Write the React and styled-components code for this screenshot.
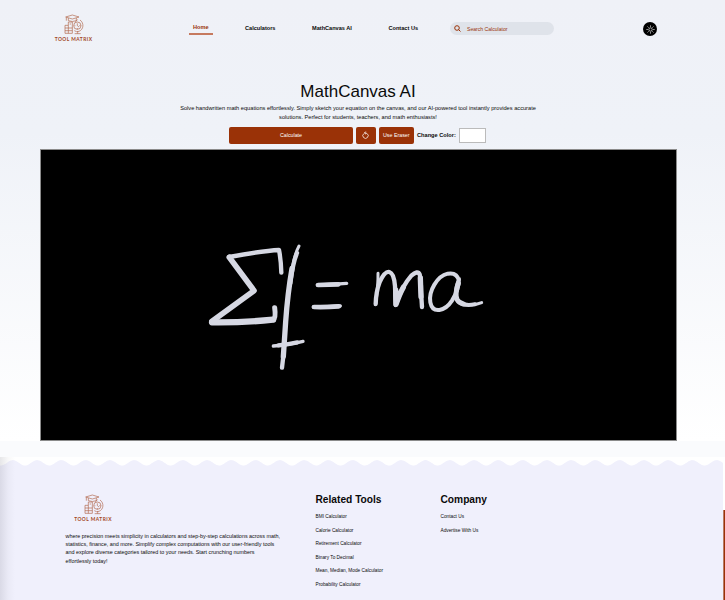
import React from "react";
import styled, { createGlobalStyle } from "styled-components";

const rust = "#9a3207";

const Global = createGlobalStyle`
  * { box-sizing: border-box; }
  html, body { margin: 0; padding: 0; }
  body {
    width: 725px;
    height: 600px;
    overflow: hidden;
    font-family: "Liberation Sans", Arial, sans-serif;
    color: #0a0a0a;
    background: #fff;
  }
  h1, h2, p, ul { margin: 0; padding: 0; }
`;

const Page = styled.div`
  width: 725px;
  height: 600px;
  overflow: hidden;
  display: flex;
  flex-direction: column;
`;

const Upper = styled.div`
  height: 441px;
  flex: none;
  display: flex;
  flex-direction: column;
  background: linear-gradient(180deg, #eff1f7 0%, #eff2f8 30%, #ffffff 100%);
`;

const Header = styled.header`
  height: 57px;
  display: flex;
  align-items: flex-start;
  padding: 14px 68px 0 55px;
`;

const Brand = styled.div`
  display: flex;
  flex-direction: column;
  align-items: center;
  width: 37px;
  height: 28px;
  color: ${rust};
  svg { display: block; flex: none; }
`;

const BrandName = styled.span`
  margin-top: 1px;
  font: 700 4.9px/6px "Lato", "Liberation Sans", sans-serif;
  letter-spacing: 0.45px;
  white-space: nowrap;
  opacity: 0.9;
`;

const Nav = styled.nav`
  display: flex;
  margin: 8px 0 0 96.5px;
  width: 261.5px;
  height: 14px;
`;

const NavItem = styled.a`
  flex: none;
  width: ${(p) => p.$width}px;
  font-size: 5.6px;
  font-weight: 700;
  line-height: 12px;
  white-space: nowrap;
`;

const ActiveItem = styled(NavItem)`
  height: 13px;
  margin-right: 32px;
  line-height: 10px;
  text-align: center;
  color: ${rust};
  border-bottom: 2px solid #c67a5f;
`;

const Search = styled.div`
  display: flex;
  align-items: center;
  gap: 6px;
  width: 104px;
  height: 13px;
  margin-top: 8.3px;
  padding-left: 4px;
  border-radius: 7px;
  background: #dfe3ea;
  color: ${rust};
  font-size: 5.1px;
  white-space: nowrap;
`;

const ThemeToggle = styled.button`
  display: grid;
  place-items: center;
  width: 14px;
  height: 14px;
  margin: 8px 0 0 auto;
  padding: 0;
  border: 0;
  border-radius: 50%;
  background: #000;
  color: #ddd;
`;

const Title = styled.h1`
  margin-top: 24px;
  height: 21px;
  font-size: 17px;
  font-weight: 400;
  line-height: 21px;
  text-align: center;
  padding-right: 9px;
`;

const Lead = styled.p`
  margin-top: 2px;
  padding-right: 9px;
  font-size: 5.66px;
  line-height: 8.7px;
  text-align: center;
  white-space: nowrap;
`;

const Toolbar = styled.div`
  display: flex;
  align-items: center;
  height: 17px;
  margin: 5.4px 0 5.2px 229px;
`;

const ToolButton = styled.button`
  display: grid;
  place-items: center;
  width: ${(p) => p.$width}px;
  height: 17px;
  margin-right: 3px;
  padding: 0;
  border: 0;
  border-radius: 2px;
  background: ${rust};
  color: #fff;
  font: 5.3px "Liberation Sans", Arial, sans-serif;
  white-space: nowrap;
`;

const ColorLabel = styled.span`
  width: 42px;
  font-size: 5.65px;
  font-weight: 700;
  white-space: nowrap;
`;

const Swatch = styled.span`
  width: 27px;
  height: 15px;
  border: 1px solid #bbb;
  background: #fff;
`;

const Canvas = styled.div`
  flex: none;
  width: 637px;
  height: 292px;
  margin-left: 40px;
  border: 1px solid #8b8b8b;
  background: #000;
  svg { display: block; }
`;

const Strip = styled.div`
  flex: none;
  height: 15.5px;
  background: #fafbfd;
`;

const FooterWrap = styled.footer`
  position: relative;
  flex: 1;
  display: flex;
  flex-direction: column;
  width: 723px;
  background: #f0f0fc;
  > svg { display: block; flex: none; }
`;

const EdgeShade = styled.div`
  position: absolute;
  inset: 0 auto 0 0;
  width: 15px;
  background: linear-gradient(90deg, rgba(90, 90, 105, 0.15), rgba(90, 90, 105, 0.04) 55%, transparent);
`;

const ScrollMark = styled.div`
  position: absolute;
  top: 53.5px;
  right: -2px;
  bottom: 0;
  width: 2px;
  background: ${rust};
  border-left: 1px solid #b77a65;
`;

const Columns = styled.div`
  display: grid;
  grid-template-columns: 250px 125px 1fr;
  padding: 26px 0 0 65.5px;
`;

const About = styled.div`
  > div { margin: 1.5px 0 0 9px; }
  p {
    margin-top: 10px;
    font-size: 5.42px;
    line-height: 8.2px;
    white-space: nowrap;
  }
`;

const Heading = styled.h2`
  font-size: 10.2px;
  line-height: 13px;
  white-space: nowrap;
`;

const Links = styled.ul`
  margin-top: 4.5px;
  list-style: none;
  font-size: 4.77px;
  line-height: 13.6px;
  white-space: nowrap;
`;

function Logo() {
  return (
    <Brand>
      <svg width="21" height="21" viewBox="0 0 63 63" fill="none" stroke="currentColor" strokeWidth="2" opacity="0.72">
        <path d="M8 9 28 3l20 6-20 6zM16 12v8q12 5 24 0v-8M10 10v10" />
        <path d="M6 58V34h10V24h12v34zM6 42h22M6 50h22M16 34v24M20 30h4" />
        <path d="M44 17q-5 2-7 8" />
        <circle cx="43" cy="35" r="11" />
        <path d="M43 28v7l5 4M34 35h3M49 35h4M43 42v4M51 18c13 9 11 29-3 34q-8 3-14-2M44 52v7M35 59h18" />
      </svg>
      <BrandName>TOOL MATRIX</BrandName>
    </Brand>
  );
}

function Wave() {
  const period = 24.27;
  const points = [];
  for (let x = 723; x >= 0; x -= 1) {
    const y = 5.8 - 2.7 * Math.cos(((x - 12.9) / period) * Math.PI * 2);
    points.push(`L${x} ${y.toFixed(2)}`);
  }
  return (
    <svg width="723" height="10" viewBox="0 0 723 10">
      <path d={`M0 0H723${points.join("")}Z`} fill="#fff" />
    </svg>
  );
}

function Equation() {
  return (
    <svg width="635" height="290" viewBox="41 150 635 290" fill="none" stroke="#d6d8e3" strokeLinecap="round" strokeLinejoin="round">
      <g transform="translate(200 235) scale(.33333)">
        <path strokeWidth="13" d="M244 113Q243 75 237 45 190 47 87 66" />
        <path strokeWidth="17" d="M88 67 162 167 36 259" />
        <path strokeWidth="19" d="M36 262Q130 263 219 254" />
        <path strokeWidth="15" d="M220 254Q228 248 224 218" />
        <path strokeWidth="9" d="M297 33Q285 55 279 90" />
        <path strokeWidth="13" d="M291 54Q278 85 271 145" />
        <path strokeWidth="16" d="M276 100Q263 175 257 260L250 365" />
        <path strokeWidth="13" d="M251 355 246 398" />
        <path strokeWidth="10" d="M220 333Q270 329 309 319" />
        <path strokeWidth="13" d="M235 331Q266 328 292 322" />
        <path strokeWidth="10" d="M352 150Q395 149 440 145M340 216Q382 216 421 213" />
        <path strokeWidth="14" d="M354 150Q390 149 415 148M342 216Q380 217 416 214" />
      </g>
      <g transform="translate(340 250) scale(.33333)">
        <path strokeWidth="9" d="M114 70Q115 100 107 163" />
        <path strokeWidth="13" d="M107 162Q108 125 119 96 135 62 148 66 162 70 165 108L167 165Q187 107 214 77 233 60 239 73 243 85 243 125L246 171" />
        <path strokeWidth="16" d="M167 120 168 163Q180 129 190 112M241 84 243 140" />
        <path strokeWidth="12" d="M357 92Q351 66 323 71C292 78 265 123 271 157 278 193 315 184 336 152 352 126 357 106 357 87Q341 133 352 150 366 170 405 163" />
        <path strokeWidth="15" d="M355 100Q344 132 351 148 357 159 370 162" />
        <path strokeWidth="9" d="M395 164Q413 163 425 158" />
      </g>
    </svg>
  );
}

const tools = ["BMI Calculator", "Calorie Calculator", "Retirement Calculator", "Binary To Decimal", "Mean, Median, Mode Calculator", "Probability Calculator"];
const company = ["Contact Us", "Advertise With Us"];

export default function App() {
  return (
    <Page>
      <Global />
      <Upper>
        <Header>
          <Logo />
          <Nav>
            <ActiveItem $width={24.5}>Home</ActiveItem>
            <NavItem $width={67}>Calculators</NavItem>
            <NavItem $width={76.5}>MathCanvas AI</NavItem>
            <NavItem $width={40}>Contact Us</NavItem>
          </Nav>
          <Search>
            <svg width="7" height="7" viewBox="0 0 14 14" fill="none" stroke="currentColor" strokeWidth="2">
              <circle cx="6" cy="6" r="4.6" />
              <path d="m9 9 4 4" />
            </svg>
            Search Calculator
          </Search>
          <ThemeToggle aria-label="Toggle theme">
            <svg width="9" height="9" viewBox="0 0 24 24" fill="none" stroke="currentColor" strokeWidth="2">
              <circle cx="12" cy="12" r="4.5" />
              <path d="M12 1v4M12 19v4M1 12h4M19 12h4M4 4l3 3M17 17l3 3M4 20l3-3M17 7l3-3" />
            </svg>
          </ThemeToggle>
        </Header>
        <Title>MathCanvas AI</Title>
        <Lead>
          Solve handwritten math equations effortlessly. Simply sketch your equation on the canvas, and our AI-powered tool instantly provides accurate
          <br />
          solutions. Perfect for students, teachers, and math enthusiasts!
        </Lead>
        <Toolbar>
          <ToolButton $width={124}>Calculate</ToolButton>
          <ToolButton $width={19.5} aria-label="Reset">
            <svg width="7" height="8" viewBox="0 0 14 16" fill="none" stroke="currentColor" strokeWidth="1.5">
              <path d="M4 5a5.300 5.300 0 1 0 6 0Q8 3.500 5 4M7.500 1 5 4l3 2.500" />
            </svg>
          </ToolButton>
          <ToolButton $width={35.5}>Use Eraser</ToolButton>
          <ColorLabel>Change Color:</ColorLabel>
          <Swatch />
        </Toolbar>
        <Canvas>
          <Equation />
        </Canvas>
      </Upper>
      <Strip />
      <FooterWrap>
        <Wave />
        <EdgeShade />
        <ScrollMark />
        <Columns>
          <About>
            <Logo />
            <p>
              where precision meets simplicity in calculators and step-by-step calculations across math,
              <br />
              statistics, finance, and more. Simplify complex computations with our user-friendly tools
              <br />
              and explore diverse categories tailored to your needs. Start crunching numbers
              <br />
              effortlessly today!
            </p>
          </About>
          <div>
            <Heading>Related Tools</Heading>
            <Links>{tools.map((t) => <li key={t}>{t}</li>)}</Links>
          </div>
          <div>
            <Heading>Company</Heading>
            <Links>{company.map((t) => <li key={t}>{t}</li>)}</Links>
          </div>
        </Columns>
      </FooterWrap>
    </Page>
  );
}
